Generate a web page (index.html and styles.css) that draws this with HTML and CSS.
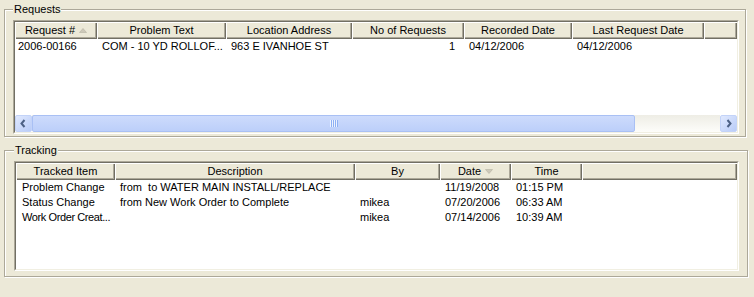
FILE: index.html
```html
<!DOCTYPE html>
<html lang="en">
<head>
    <meta charset="UTF-8">
    <title>Work Order Requests</title>
    <link rel="stylesheet" href="styles.css">
</head>
<body>

<div class="window">
    <fieldset class="group group-requests">
        <legend>Requests</legend>
        <div class="list list-requests">
            <div class="list-inner">
                <div class="head">
                    <div class="hcell">Request #<svg class="sort" width="8" height="5" viewBox="0 0 8 5"><polygon points="0.5,4.5 4,0.5 7.5,4.5" /></svg></div>
                    <div class="hcell">Problem Text</div>
                    <div class="hcell">Location Address</div>
                    <div class="hcell">No of Requests</div>
                    <div class="hcell">Recorded Date</div>
                    <div class="hcell">Last Request Date</div>
                    <div class="hcell"></div>
                </div>
                <div class="rows">
                    <div class="row">
                        <div class="cell first">2006-00166</div>
                        <div class="cell">COM - 10 YD ROLLOF...</div>
                        <div class="cell">963 E IVANHOE ST</div>
                        <div class="cell num">1</div>
                        <div class="cell">04/12/2006</div>
                        <div class="cell">04/12/2006</div>
                        <div class="cell"></div>
                    </div>
                </div>
                <div class="hscroll">
                    <div class="sbtn">
                        <svg width="15" height="15" viewBox="0 0 15 15"><path d="M8.5 4 L5.5 7.5 L8.5 11" /></svg>
                    </div>
                    <div class="track">
                        <div class="thumb"><span class="grip"></span></div>
                    </div>
                    <div class="sbtn">
                        <svg width="15" height="15" viewBox="0 0 15 15"><path d="M6.5 4 L9.5 7.5 L6.5 11" /></svg>
                    </div>
                </div>
            </div>
        </div>
    </fieldset>

    <fieldset class="group group-tracking">
        <legend>Tracking</legend>
        <div class="list list-tracking">
            <div class="list-inner">
                <div class="head">
                    <div class="hcell">Tracked Item</div>
                    <div class="hcell">Description</div>
                    <div class="hcell">By</div>
                    <div class="hcell">Date<svg class="sort" width="8" height="5" viewBox="0 0 8 5"><polygon points="0.5,0.5 4,4.5 7.5,0.5" /></svg></div>
                    <div class="hcell">Time</div>
                    <div class="hcell"></div>
                </div>
                <div class="rows">
                    <div class="row">
                        <div class="cell first">Problem Change</div>
                        <div class="cell">from  to WATER MAIN INSTALL/REPLACE</div>
                        <div class="cell"></div>
                        <div class="cell">11/19/2008</div>
                        <div class="cell">01:15 PM</div>
                        <div class="cell"></div>
                    </div>
                    <div class="row">
                        <div class="cell first">Status Change</div>
                        <div class="cell">from New Work Order to Complete</div>
                        <div class="cell">mikea</div>
                        <div class="cell">07/20/2006</div>
                        <div class="cell">06:33 AM</div>
                        <div class="cell"></div>
                    </div>
                    <div class="row">
                        <div class="cell first tight">Work Order Creat...</div>
                        <div class="cell"></div>
                        <div class="cell">mikea</div>
                        <div class="cell">07/14/2006</div>
                        <div class="cell">10:39 AM</div>
                        <div class="cell"></div>
                    </div>
                </div>
            </div>
        </div>
    </fieldset>
</div>

</body>
</html>
```

FILE: styles.css
```css
/* Janela no estilo Windows XP */
body {
    margin: 0;
    background-color: #ece9d8;
    font-family: "Liberation Sans", Arial, sans-serif;
    font-size: 11px;
    color: #000;
}
.window {
    width: 754px;
    height: 297px;
    padding: 3px 0 0 4px;
    box-sizing: border-box;
}

/* Caixas de grupo */
.group {
    margin: 0;
    border: 1px solid #aca899;
    box-shadow: inset 1px 1px 0 #fff, 1px 1px 0 #fff;
    box-sizing: border-box;
    min-inline-size: 0;
}
.group legend {
    padding: 0 1px;
    line-height: 13px;
    background-color: #ece9d8;
}
.group-requests {
    width: 742px;
    padding: 4px 6px 2px 8px;
}
.group-tracking {
    width: 744px;
    margin-top: 7px;
    padding: 4px 8px 5px 9px;
}

/* Listas */
.list {
    border: 1px solid;
    border-color: #aca899 #fff #fff #aca899;
    box-sizing: border-box;
}
.list-requests {
    width: 726px;
    height: 114px;
}
.list-tracking {
    width: 725px;
    height: 110px;
}
.list-inner {
    height: 100%;
    box-sizing: border-box;
    border: 1px solid;
    border-color: #716f64 #f1efe2 #f1efe2 #716f64;
    display: flex;
    flex-direction: column;
    background-color: #fff;
}
.head, .row {
    display: grid;
}
.list-requests .head, .list-requests .row {
    grid-template-columns: 82px 129px 126px 112px 108px 132px 33px;
}
.list-tracking .head, .list-tracking .row {
    grid-template-columns: 99px 240px 85px 71px 71px 155px;
}
.hcell {
    height: 17px;
    background-color: #ece9d8;
    box-shadow: inset 1px 1px 0 #fff, inset -1px -1px 0 #716f64, inset -2px -2px 0 #aca899;
    display: flex;
    align-items: center;
    justify-content: center;
    gap: 4px;
    padding-bottom: 1px;
    box-sizing: border-box;
    white-space: nowrap;
    overflow: hidden;
}
.sort polygon {
    fill: #cdc9b9;
    stroke: #b5b1a2;
    stroke-width: 0.6;
}
.rows {
    flex: 1;
}
.row {
    height: 15px;
    line-height: 15px;
}
.cell {
    padding: 0 5px;
    white-space: pre;
    overflow: hidden;
}
.list-requests .cell.first {
    padding-left: 3px;
}
.list-tracking .cell.first {
    padding-left: 6px;
}
.cell.tight {
    padding-right: 0;
    letter-spacing: -0.4px;
}
.cell.num {
    text-align: right;
    padding-right: 9px;
}

/* Barra de rolagem horizontal */
.hscroll {
    height: 17px;
    display: flex;
}
.sbtn {
    width: 17px;
    height: 17px;
    box-sizing: border-box;
    border: 1px solid #c3d3f8;
    border-radius: 2px;
    background: linear-gradient(135deg, #e0e9fe, #b9ccf8);
    display: flex;
    align-items: center;
    justify-content: center;
}
.sbtn path {
    fill: none;
    stroke: #4d6185;
    stroke-width: 2;
}
.track {
    flex: 1;
    background: linear-gradient(to bottom, #eeede5, #fdfdfa);
}
.thumb {
    width: 603px;
    height: 17px;
    box-sizing: border-box;
    border: 1px solid #a9c0f4;
    border-radius: 2px;
    background: linear-gradient(to bottom, #cddbfc, #bccffa);
    display: flex;
    align-items: center;
    justify-content: center;
}
.grip {
    width: 8px;
    height: 7px;
    background: repeating-linear-gradient(to right, #eef3fe 0 1px, #8db0f5 1px 2px);
}
```
